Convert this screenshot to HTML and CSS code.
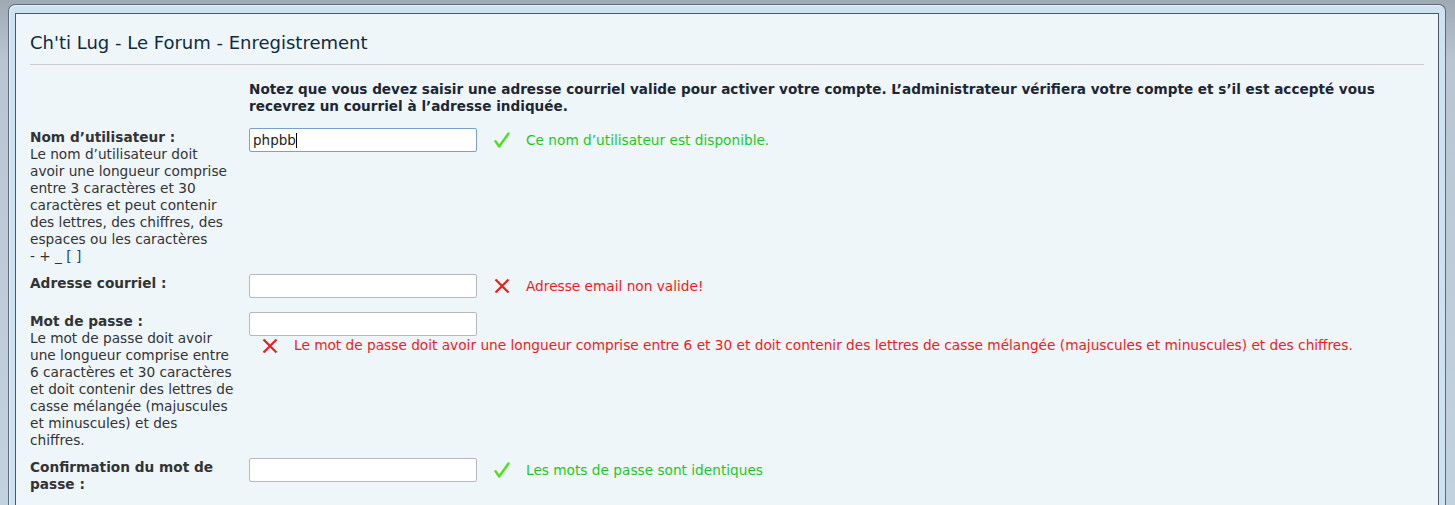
FILE: index.html
```html
<!DOCTYPE html>
<html lang="fr">
<head>
<meta charset="utf-8">
<title>Ch'ti Lug - Le Forum - Enregistrement</title>
<link rel="stylesheet" href="styles.css">
</head>
<body>
<div class="frame">
  <div class="panel">
    <h2 class="title">Ch'ti Lug - Le Forum - Enregistrement</h2>
    <div class="form">
      <div class="row intro">
        <div class="dt"></div>
        <div class="dd notice">Notez que vous devez saisir une adresse courriel valide pour activer votre compte. L’administrateur vérifiera votre compte et s’il est accepté vous recevrez un courriel à l’adresse indiquée.</div>
      </div>
      <div class="row">
        <div class="dt"><span class="label">Nom d’utilisateur :</span><br>Le nom d’utilisateur doit avoir une longueur comprise entre 3 caractères et 30 caractères et peut contenir des lettres, des chiffres, des espaces ou les caractères<br>- + _ <span class="br">[ ]</span></div>
        <div class="dd">
          <span class="input focus">phpbb<span class="caret"></span></span><span class="msg ok"><svg class="icon" viewBox="0 0 16 16"><path d="M1.5 9.2 L5.2 14.5 L14.5 1.5" fill="none" stroke="#4fe01e" stroke-width="2.4" stroke-linejoin="round" stroke-linecap="round"/></svg>Ce nom d’utilisateur est disponible.</span>
        </div>
      </div>
      <div class="row">
        <div class="dt"><span class="label">Adresse courriel :</span></div>
        <div class="dd">
          <span class="input"></span><span class="msg err"><svg class="icon" viewBox="0 0 16 16"><path d="M1.5 1.5 L14.5 14.5 M14.5 1.5 L1.5 14.5" fill="none" stroke="#f01c1c" stroke-width="2.2"/></svg>Adresse email non valide!</span>
        </div>
      </div>
      <div class="row">
        <div class="dt"><span class="label">Mot de passe :</span><br>Le mot de passe doit avoir une longueur comprise entre 6 caractères et 30 caractères et doit contenir des lettres de casse mélangée (majuscules et minuscules) et des chiffres.</div>
        <div class="dd">
          <span class="input"></span>
          <div class="msg err wrap"><svg class="icon" viewBox="0 0 16 16"><path d="M1.5 1.5 L14.5 14.5 M14.5 1.5 L1.5 14.5" fill="none" stroke="#f01c1c" stroke-width="2.2"/></svg>Le mot de passe doit avoir une longueur comprise entre 6 et 30 et doit contenir des lettres de casse mélangée (majuscules et minuscules) et des chiffres.</div>
        </div>
      </div>
      <div class="row">
        <div class="dt"><span class="label">Confirmation du mot de passe :</span></div>
        <div class="dd">
          <span class="input"></span><span class="msg ok"><svg class="icon" viewBox="0 0 16 16"><path d="M1.5 9.2 L5.2 14.5 L14.5 1.5" fill="none" stroke="#4fe01e" stroke-width="2.4" stroke-linejoin="round" stroke-linecap="round"/></svg>Les mots de passe sont identiques</span>
        </div>
      </div>
    </div>
  </div>
</div>
</body>
</html>
```
FILE: styles.css
```css
html, body {
  margin: 0;
  height: 100%;
}
body {
  background: linear-gradient(#9ea9b4, #b9c6d2 60px, #c3d2df);
  padding-top: 4px;
  box-sizing: border-box;
  overflow: hidden;
  font-family: "DejaVu Sans", Verdana, sans-serif;
  font-size: 13.7px;
  color: #333;
}
.frame {
  margin: 0 9px 0 8px;
  height: 600px;
  background: #cfe2f1;
  border: 1px solid #5c6a78;
  border-bottom: none;
  border-radius: 7px 7px 0 0;
  padding: 8px 6px 0 6px;
  box-shadow: inset 1px 1px 0 #e6f0f8;
}
.panel {
  height: 100%;
  background: #eff6fa;
  border: 1px solid #4a5868;
  border-bottom: none;
  padding: 17px 14px 0 14px;
}
.title {
  margin: 0;
  font-family: "DejaVu Sans", sans-serif;
  font-weight: normal;
  font-size: 18px;
  line-height: 24px;
  color: #0f2a40;
  padding-bottom: 9px;
  border-bottom: 1px solid #cccccc;
}
.form {
  padding-top: 16px;
}
.row {
  display: grid;
  grid-template-columns: 219px 1fr;
  margin-bottom: 9px;
}
.row.intro {
  margin-bottom: 8px;
}
.dt {
  padding-right: 15px;
  line-height: 17px;
  padding-top: 1px;
}
.label {
  font-weight: bold;
}
.br {
  color: #1e3f7a;
}
.dd {
  padding-bottom: 5px;
  line-height: 17px;
}
.notice {
  font-weight: bold;
  font-size: 13.6px;
  color: #1c2733;
}
.input {
  display: inline-block;
  vertical-align: top;
  box-sizing: border-box;
  width: 228px;
  height: 24px;
  background: #fff;
  border: 1px solid #b5b8bd;
  border-radius: 2px;
  padding: 3px 3px;
  font-size: 13.5px;
  color: #222;
}
.input.focus {
  border-color: #7b9fd4;
}
.caret {
  display: inline-block;
  width: 1px;
  height: 15px;
  background: #000;
  vertical-align: -3px;
}
.msg {
  display: inline-flex;
  align-items: center;
  margin-left: 17px;
  height: 24px;
  vertical-align: top;
}
.msg.wrap {
  display: flex;
  margin-left: 13px;
  height: 17px;
  margin-top: 1px;
}
.icon {
  width: 16px;
  height: 16px;
  margin-right: 16px;
  flex: none;
}
.ok {
  color: #1ec81e;
}
.err {
  color: #f21a1a;
}
```
